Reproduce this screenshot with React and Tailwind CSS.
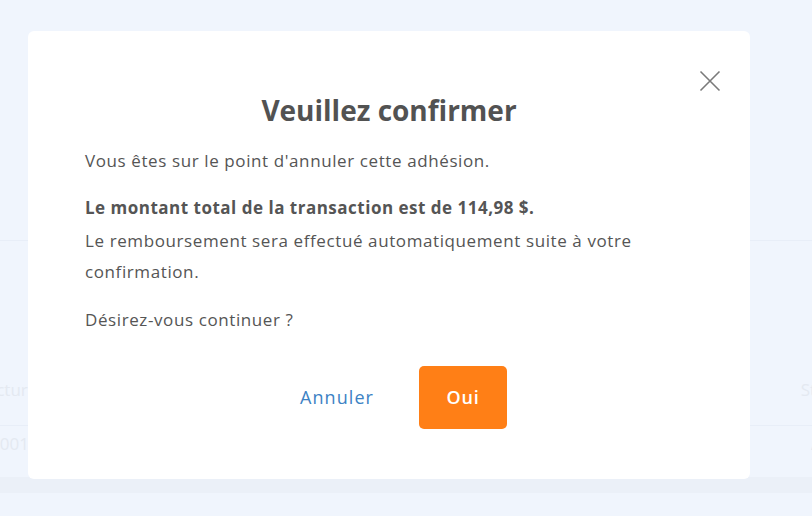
export default function App() {
  return (
    <div className="relative w-[812px] h-[516px] overflow-hidden bg-[#f0f5fd] font-['Open_Sans',sans-serif]">
      {/* faded page behind the overlay */}
      <div className="pt-[240px]">
        <div className="h-px bg-[#e8eef8]" />
        <div className="mt-[129px] flex h-[40px] items-center justify-between text-[17px] text-[#e4e9f1]">
          <span className="-ml-[22px]">Facture</span>
          <span className="-mr-[36px]">Statut</span>
        </div>
        <div className="mt-[15px] h-px bg-[#e8eef8]" />
        <div className="flex h-[36px] items-center justify-between text-[17px] text-[#e4e9f1]">
          <span className="-ml-[10px]">0001</span>
          <span className="-mr-[34px]">Actif</span>
        </div>
        <div className="mt-[15px] h-[16px] bg-[#ebf0f8]" />
      </div>

      <div className="absolute left-[28px] top-[31px] flex h-[448px] w-[722px] flex-col rounded-md bg-white px-[57px] pt-[59px] text-[#555555]">
        <button className="absolute right-[29px] top-[39px] text-[#7a7a7a]">
          <svg width="22" height="22" viewBox="0 0 22 22" fill="none" stroke="currentColor" strokeWidth="1.6">
            <path d="M1.5 1.5l19 19M20.5 1.5l-19 19" />
          </svg>
        </button>

        <h2 className="text-center text-[28px] font-bold leading-[40px] text-[#525252]">Veuillez confirmer</h2>

        <p className="mt-[15px] text-[17px] leading-[31px] tracking-[0.6px]">Vous êtes sur le point d'annuler cette adhésion.</p>

        <div className="mt-4 text-[17px] leading-[31px] tracking-[0.6px]">
          <div className="mb-[2px] font-bold tracking-[0.5px]">Le montant total de la transaction est de 114,98 $.</div>
          <div>
            Le remboursement sera effectué automatiquement suite à votre
            <br />
            confirmation.
          </div>
        </div>

        <p className="mt-[17px] text-[17px] leading-[31px] tracking-[0.6px]">Désirez-vous continuer ?</p>

        <div className="mt-[31px] flex justify-center gap-[16px]">
          <button className="h-[63px] w-[132px] text-[18px] tracking-[0.06em] text-[#3c82c4]">Annuler</button>
          <button className="h-[63px] w-[88px] rounded-[5px] bg-[#ff7f16] text-[18px] font-semibold tracking-[0.04em] text-white">Oui</button>
        </div>
      </div>
    </div>
  );
}
